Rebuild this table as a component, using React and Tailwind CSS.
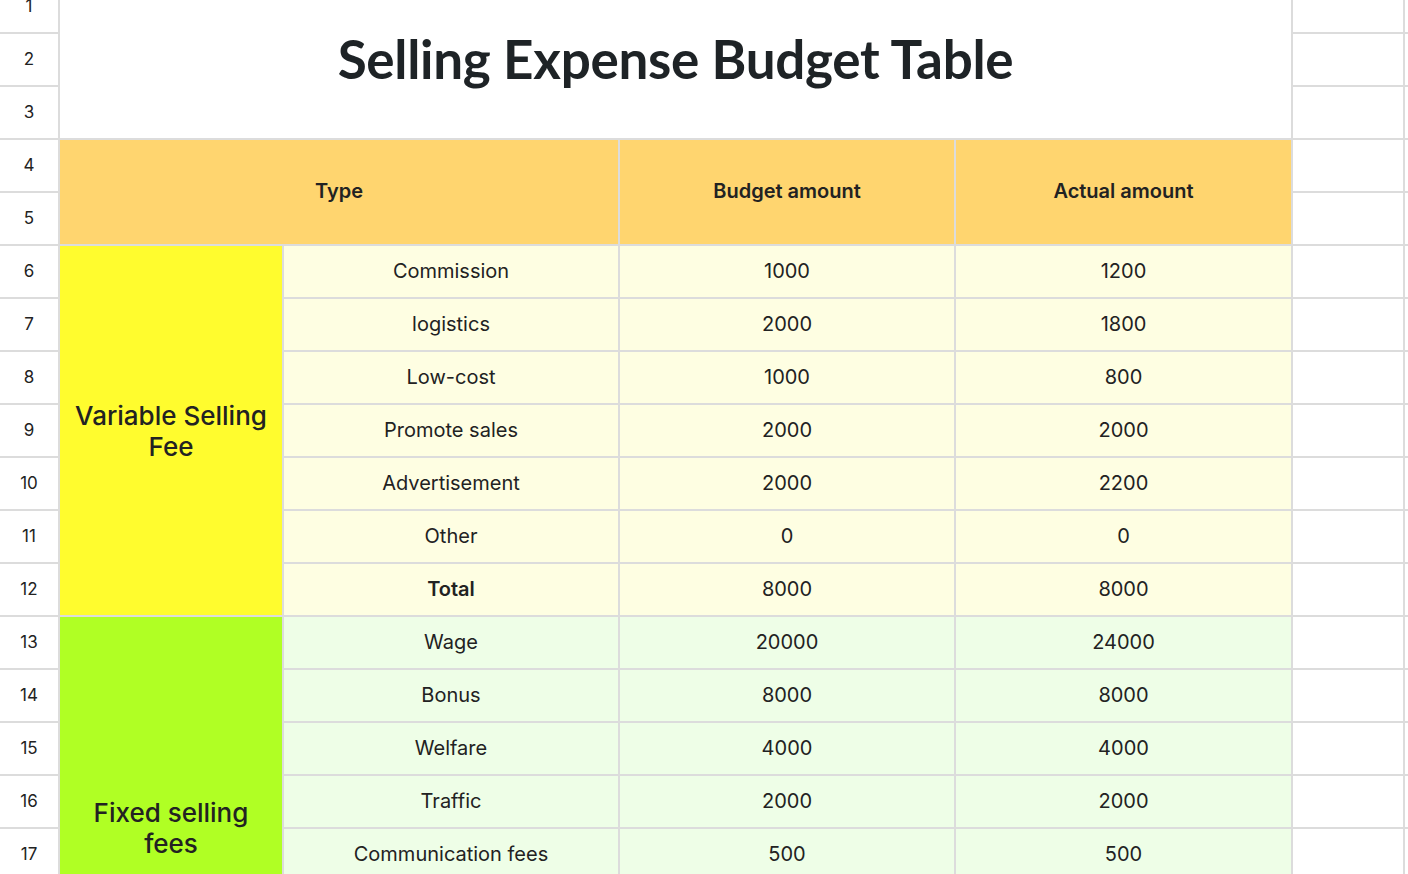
import React from "react";

const variable = [
  ["Commission", "1000", "1200"],
  ["logistics", "2000", "1800"],
  ["Low-cost", "1000", "800"],
  ["Promote sales", "2000", "2000"],
  ["Advertisement", "2000", "2200"],
  ["Other", "0", "0"],
  ["Total", "8000", "8000", true],
];

const fixed = [
  ["Wage", "20000", "24000"],
  ["Bonus", "8000", "8000"],
  ["Welfare", "4000", "4000"],
  ["Traffic", "2000", "2000"],
  ["Communication fees", "500", "500"],
  ["Office fees", "1000", "1000"],
  ["Other", "0", "0"],
  ["Total", "35500", "39500", true],
];

function Num({ n }) {
  return (
    <div className="bg-white flex items-center justify-center text-[17px] text-[#222]">
      {n}
    </div>
  );
}

function Blanks() {
  return (
    <>
      <div className="bg-white" />
      <div className="bg-white" />
    </>
  );
}

function DataRow({ n, item, bg, group }) {
  const [name, budget, actual, bold] = item;
  const cell = `${bg} flex items-center justify-center pb-[2px] text-[20px] text-[#222]`;
  return (
    <>
      <Num n={n} />
      {group}
      <div className={`${cell} ${bold ? "font-semibold" : ""}`}>{name}</div>
      <div className={cell}>{budget}</div>
      <div className={cell}>{actual}</div>
      <Blanks />
    </>
  );
}

export default function App() {
  const head =
    "bg-[#ffd56f] flex items-center justify-center pb-[2px] text-[20px] font-semibold text-[#222] row-span-2";

  return (
    <div className="w-[1408px] h-[874px] overflow-hidden bg-white font-['Inter','Noto_Sans',sans-serif]">
      <div className="-mt-[19px] w-[1445px] grid grid-cols-[58px_222px_334px_334px_335px_110px_40px] auto-rows-[51px] gap-[2px] bg-[#dcdcdc]">
        {/* rows 1-3: title */}
        <Num n={1} />
        <div className="col-span-4 row-span-3 bg-white flex items-center justify-center pb-[2px]">
          <h1 className="font-['Lato','Open_Sans',sans-serif] text-[53px] font-bold tracking-[-0.3px] text-[#1e2326]">
            Selling Expense Budget Table
          </h1>
        </div>
        <Blanks />
        <Num n={2} />
        <Blanks />
        <Num n={3} />
        <Blanks />

        {/* rows 4-5: header */}
        <Num n={4} />
        <div className={`${head} col-span-2`}>Type</div>
        <div className={head}>Budget amount</div>
        <div className={head}>Actual amount</div>
        <Blanks />
        <Num n={5} />
        <Blanks />

        {/* variable selling fee */}
        {variable.map((item, i) => (
          <DataRow
            key={"v" + i}
            n={6 + i}
            item={item}
            bg="bg-[#fefee2]"
            group={
              i === 0 ? (
                <div className="row-span-7 bg-[#fffc2e] flex items-center justify-center text-center text-[26px] font-medium leading-[31px] text-[#222] px-2">
                  Variable Selling
                  <br />
                  Fee
                </div>
              ) : null
            }
          />
        ))}

        {/* fixed selling fees */}
        {fixed.map((item, i) => (
          <DataRow
            key={"f" + i}
            n={13 + i}
            item={item}
            bg="bg-[#eefee7]"
            group={
              i === 0 ? (
                <div className="row-span-8 bg-[#b0ff24] flex items-center justify-center text-center text-[26px] font-medium leading-[31px] text-[#222] px-2">
                  Fixed selling
                  <br />
                  fees
                </div>
              ) : null
            }
          />
        ))}
      </div>
    </div>
  );
}
